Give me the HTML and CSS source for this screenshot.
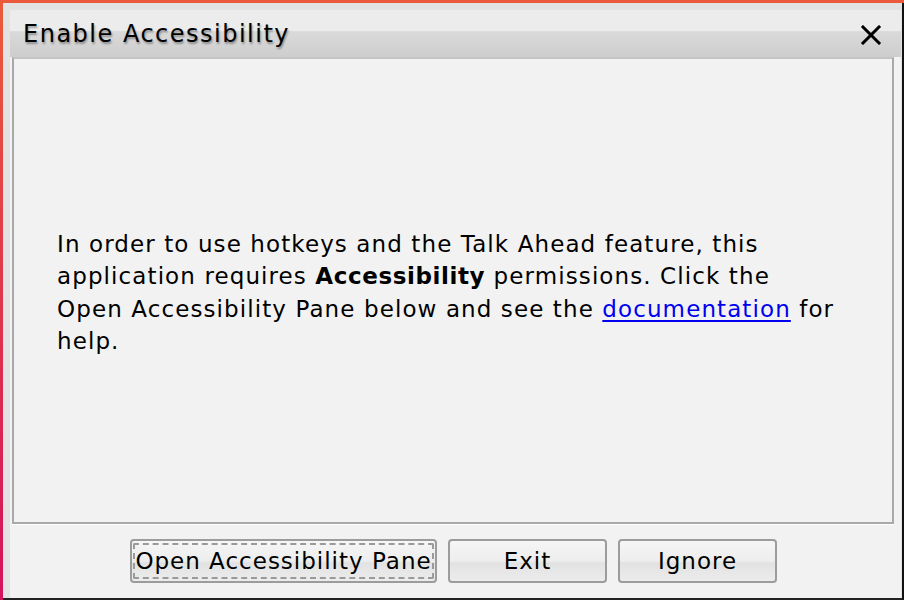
FILE: index.html
```html
<!DOCTYPE html>
<html>
<head>
<meta charset="utf-8">
<link rel="stylesheet" href="styles.css">
</head>
<body>
<div class="window">
  <div class="titlebar">
    <span class="title">Enable Accessibility</span>
    <svg class="close" width="22" height="20" viewBox="0 0 22 20">
      <path d="M3 2 L19 18 M19 2 L3 18" stroke="#000" stroke-width="3" stroke-linecap="square"/>
    </svg>
  </div>
  <div class="body">
    <div class="panel">
      <p class="msg">In order to use hotkeys and the Talk Ahead feature, this<br>application requires <b>Accessibility</b> permissions. Click the<br>Open Accessibility Pane below and see the <a href="#">documentation</a> for<br>help.</p>
    </div>
    <div class="buttons">
      <button class="btn focus"><span>Open Accessibility Pane</span></button>
      <button class="btn"><span>Exit</span></button>
      <button class="btn"><span>Ignore</span></button>
    </div>
  </div>
</div>
</body>
</html>
```
FILE: styles.css
```css
html, body {
  margin: 0;
  padding: 0;
  width: 904px;
  height: 600px;
  overflow: hidden;
}
body {
  background: linear-gradient(#ea5a3a, #dd2f50 60%, #d3125c);
  padding: 3px 0 0 3px;
  box-sizing: border-box;
  font-family: "DejaVu Sans", sans-serif;
}
.window {
  width: 901px;
  height: 597px;
  box-sizing: border-box;
  background: #e2e2e2;
  border-right: 2px solid #111;
  border-bottom: 2px solid #222;
  padding: 7px 1px 0 7px;
  display: flex;
  flex-direction: column;
}
.titlebar {
  height: 47px;
  flex: none;
  display: flex;
  align-items: center;
  justify-content: space-between;
  background: linear-gradient(#ececec 0, #ececec 44%, #dadada 46%, #cdcdcd 100%);
  padding: 0 19px 0 13px;
}
.title {
  font-size: 24px;
  letter-spacing: 1.5px;
  color: #000;
  text-shadow: 1px 2px 2px rgba(0,0,0,0.35);
  margin-top: 1px;
}
.close {
  margin-top: 3px;
}
.body {
  flex: 1;
  background: #f2f2f2;
  display: flex;
  flex-direction: column;
  padding-left: 2px;
}
.panel {
  height: 467px;
  box-sizing: border-box;
  border: 2px solid #a9a9a9;
  border-top-color: #c4c4c4;
  margin-right: 7px;
  background: #f2f2f2;
  box-shadow: 0 1px 0 #fff;
  display: flex;
  align-items: center;
  padding: 4px 20px 0 43px;
}
.msg {
  margin: 0;
  font-size: 23px;
  line-height: 32.5px;
  color: #000;
  letter-spacing: 1.1px;
  white-space: nowrap;
}
.msg b {
  font-weight: bold;
  letter-spacing: 0.6px;
}
.msg a {
  color: #0000ee;
  text-decoration: underline;
  text-underline-offset: 3px;
}
.buttons {
  flex: 1;
  display: flex;
  justify-content: center;
  align-items: flex-start;
  gap: 11px;
  padding-top: 15px;
  padding-right: 6px;
}
.btn {
  height: 44px;
  width: 159px;
  box-sizing: border-box;
  border: 2px solid #9c9c9c;
  border-radius: 4px;
  background: linear-gradient(#f6f6f6, #ededed 50%, #e2e2e2 55%, #ececec);
  font-family: "DejaVu Sans", sans-serif;
  font-size: 23px;
  letter-spacing: 1px;
  color: #000;
  padding: 0 2px;
  display: flex;
  align-items: center;
  justify-content: center;
}
.btn span {
  display: block;
  padding: 2px 3px;
  white-space: nowrap;
}
.btn.focus span {
  border: 2px dashed #9a9a9a;
  border-radius: 2px;
  padding: 3px 0;
  flex: 1;
}
.btn.focus {
  padding: 2px;
  width: 307px;
}
```
